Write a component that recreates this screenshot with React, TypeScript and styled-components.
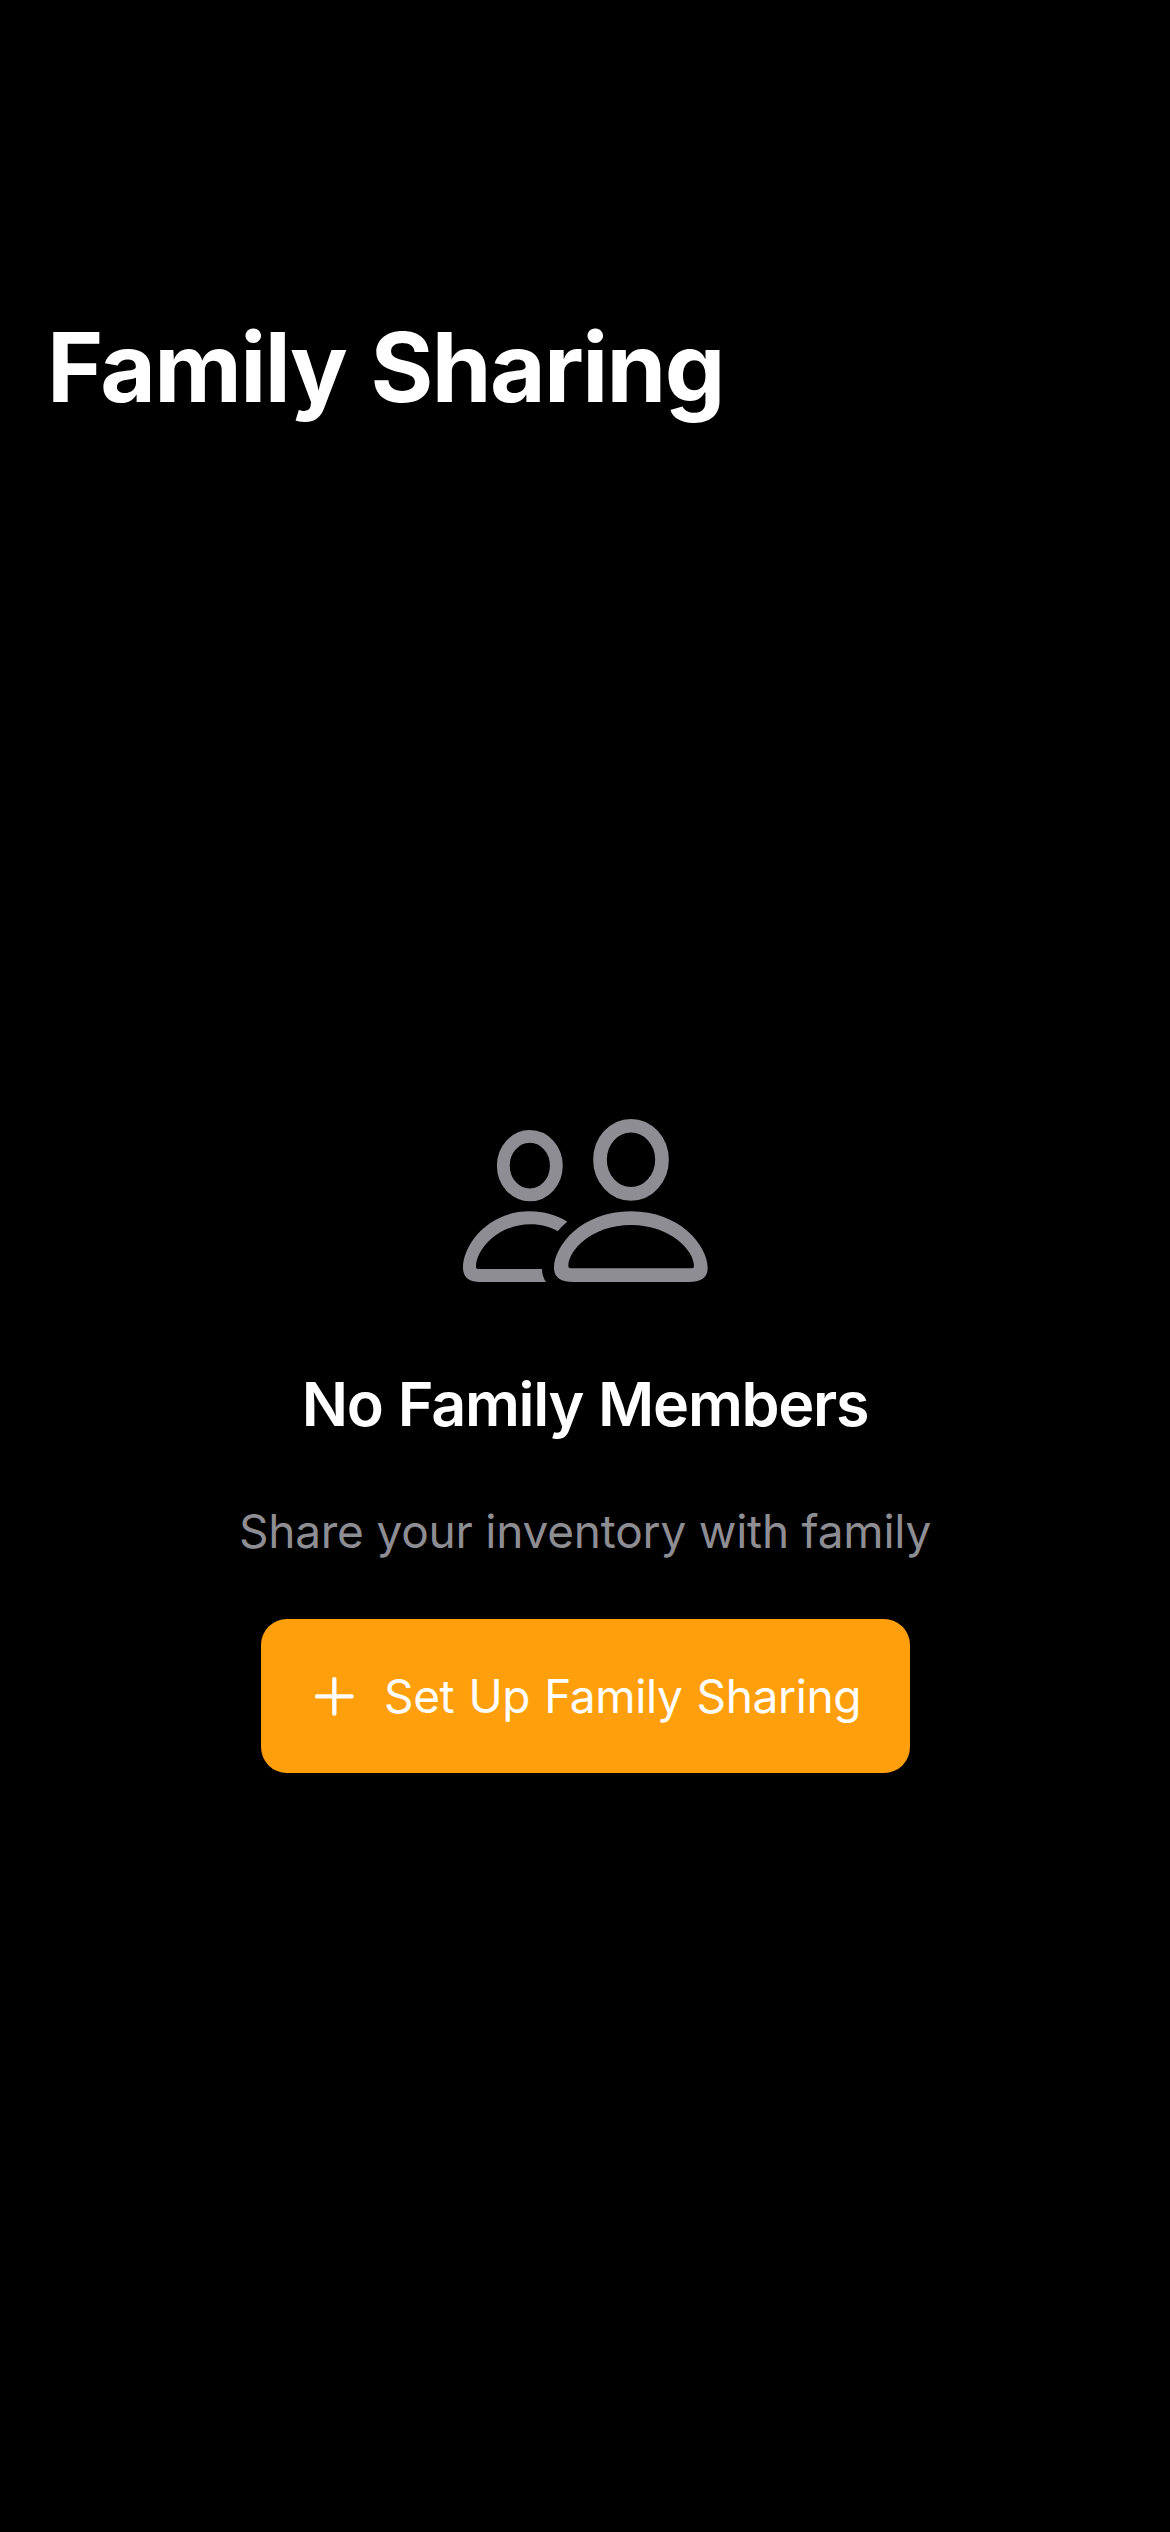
import React from "react";
import styled, { createGlobalStyle } from "styled-components";

const GlobalStyle = createGlobalStyle`
  *, *::before, *::after { box-sizing: border-box; }
  body {
    margin: 0;
    background: #000;
    font-family: Inter, Roboto, sans-serif;
  }
`;

const Screen = styled.main`
  display: flex;
  flex-direction: column;
  width: 1170px;
  height: 2532px;
  padding-top: 309px;
  background: #000;
  color: #fff;
  overflow: hidden;
`;

const PageTitle = styled.h1`
  margin: 0;
  padding-left: 47px;
  font-size: 96px;
  font-weight: 700;
  line-height: 116px;
  letter-spacing: -1.62px;
  word-spacing: 3.2px;
`;

const EmptyState = styled.section`
  display: flex;
  flex-direction: column;
  align-items: center;
  padding-top: 693px;
`;

const PeopleIcon = styled.svg`
  display: block;
  width: 246px;
  height: 164px;
  color: #8e8d93;
`;

const Heading = styled.h2`
  margin: 85px 0 0;
  font-size: 61px;
  font-weight: 600;
  line-height: 74px;
  letter-spacing: -1.28px;
  word-spacing: 1px;
  white-space: nowrap;
`;

const Description = styled.p`
  margin: 62px 0 0;
  font-size: 46px;
  line-height: 56px;
  letter-spacing: -0.22px;
  color: #8e8d93;
  white-space: nowrap;
`;

const SetUpButton = styled.button`
  display: flex;
  align-items: center;
  gap: 30px;
  width: 649px;
  height: 154px;
  margin: 60px 0 0 1px;
  padding: 0 0 0 53px;
  border: 0;
  border-radius: 26px;
  background: #ff9f0b;
  color: #fff;
  font: 400 46px/56px Inter, Roboto, sans-serif;
  letter-spacing: -0.36px;
  word-spacing: 1.5px;
  white-space: nowrap;
`;

const PlusIcon = styled.svg`
  flex: none;
  width: 40px;
  height: 40px;
`;

export default function App() {
  return (
    <>
      <GlobalStyle />
      <Screen>
        <PageTitle>Family Sharing</PageTitle>
        <EmptyState>
          <PeopleIcon viewBox="66 54 738 492" aria-hidden="true">
            <g fill="none" stroke="currentColor">
              <ellipse cx="269.5" cy="197" rx="79.5" ry="87.7" strokeWidth="38.5" />
              <ellipse cx="573" cy="179.5" rx="93" ry="102.3" strokeWidth="41" />
            </g>
            <path
              fill="currentColor"
              d="M318 546H120C86 546 69 531 69 503C69 436 142 334 269 334C312 334 350 346 382 365C371 374 362 383 353 394C330 380 302 373 272 373C172 373 108 450 108 501Q108 507 114 507H306C306 522 311 536 318 546Z"
            />
            <path
              fill="currentColor"
              fillRule="evenodd"
              d="M400 546C361 546 342 532 342 504C342 437 425 334 573 334C720 334 803 437 803 504C803 532 785 546 746 546ZM391 505H756Q762 505 762 498C762 452 692 375 573 375C454 375 385 452 385 498Q385 505 391 505Z"
            />
          </PeopleIcon>
          <Heading>No Family Members</Heading>
          <Description>Share your inventory with family</Description>
          <SetUpButton type="button">
            <PlusIcon viewBox="0 0 40 40" aria-hidden="true">
              <path
                d="M20.3 3.1V37.7M3 20.4H37.6"
                fill="none"
                stroke="currentColor"
                strokeWidth="4.3"
                strokeLinecap="round"
              />
            </PlusIcon>
            <span>Set Up Family Sharing</span>
          </SetUpButton>
        </EmptyState>
      </Screen>
    </>
  );
}
